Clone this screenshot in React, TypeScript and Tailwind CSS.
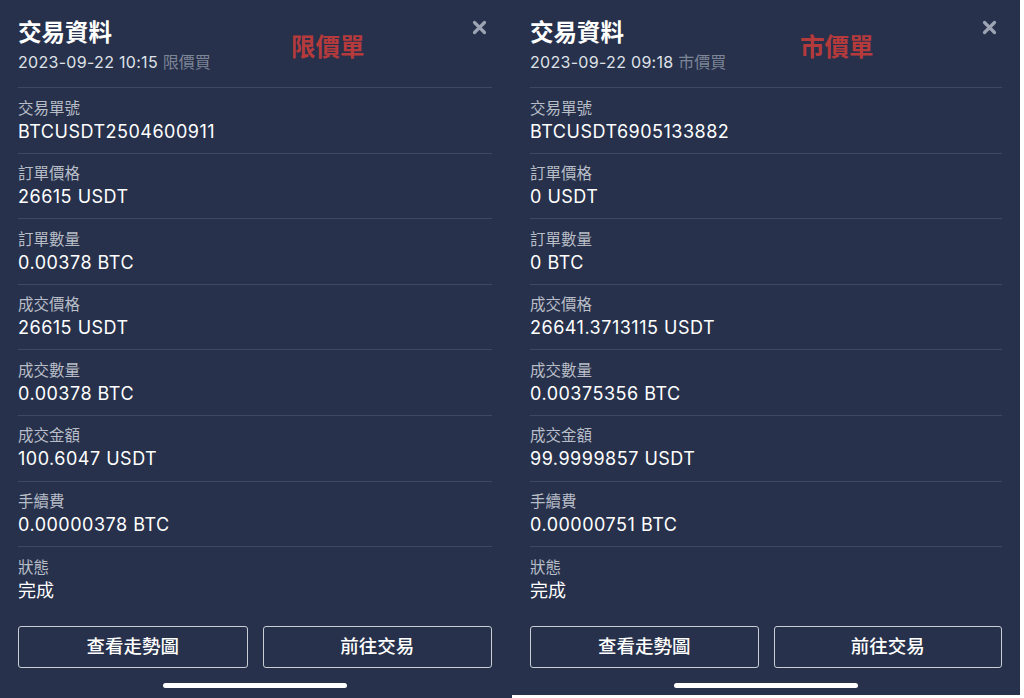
const font = { fontFamily: 'Inter, "Noto Sans CJK TC", sans-serif' }

type Row = { label: string; value: string }

function CloseIcon() {
  return (
    <svg width="15" height="15" viewBox="0 0 15 15" className="text-[#9ca3b3]">
      <path d="M2.5 2.5 L12.5 12.5 M12.5 2.5 L2.5 12.5" stroke="currentColor" strokeWidth="3.2" strokeLinecap="round" />
    </svg>
  )
}

function Panel({
  time,
  kind,
  tag,
  tagLeft,
  rows,
  status,
  width,
  height,
  pr,
}: {
  time: string
  kind: string
  tag: string
  tagLeft: string
  rows: Row[]
  status: string
  width: string
  height: string
  pr: string
}) {
  return (
    <div className={`relative flex flex-col bg-[#27314b] pl-[18px] ${width} ${height} ${pr}`} style={font}>
      <div className="flex items-start justify-between pt-[18px]">
        <div>
          <div className="text-[23.5px] font-semibold leading-[30px] text-white">交易資料</div>
          <div className="mt-[4px] text-[16px] leading-[20px] tracking-[0.3px] text-[#dfe2e8]">
            {time} <span className="tracking-normal text-[#7e8596]">{kind}</span>
          </div>
        </div>
        <div className="mr-[5px] mt-[2px]">
          <CloseIcon />
        </div>
      </div>
      <div className={`absolute top-[33px] text-[24.5px] font-bold leading-[28px] text-[#b53a3c] ${tagLeft}`}>{tag}</div>

      <div className="mt-[15px]">
        {rows.map((r) => (
          <div key={r.label} className="h-[65.6px] border-t border-[#3e4862] pt-[10.5px]">
            <div className="text-[15.5px] leading-[20px] text-[#b8bdc7]">{r.label}</div>
            <div className="text-[18px] leading-[25px] tracking-[0.5px] text-white">{r.value}</div>
          </div>
        ))}
        <div className="border-t border-[#3e4862] pt-[10.5px]">
          <div className="text-[15.5px] leading-[20px] text-[#b8bdc7]">狀態</div>
          <div className="text-[18px] leading-[25px] text-white">{status}</div>
        </div>
      </div>

      <div className="mt-[23px] grid grid-cols-2 gap-[15px]">
        <button className="h-[42px] rounded-[3px] border-[1.5px] border-[#c9cdd5] text-[18.5px] font-medium text-white">
          查看走勢圖
        </button>
        <button className="h-[42px] rounded-[3px] border-[1.5px] border-[#c9cdd5] text-[18.5px] font-medium text-white">
          前往交易
        </button>
      </div>

      <div className="mt-[15px] flex justify-center">
        <div className="h-[5px] w-[184px] rounded-full bg-white" />
      </div>
    </div>
  )
}

export default function App() {
  const leftRows: Row[] = [
    { label: '交易單號', value: 'BTCUSDT2504600911' },
    { label: '訂單價格', value: '26615 USDT' },
    { label: '訂單數量', value: '0.00378 BTC' },
    { label: '成交價格', value: '26615 USDT' },
    { label: '成交數量', value: '0.00378 BTC' },
    { label: '成交金額', value: '100.6047 USDT' },
    { label: '手續費', value: '0.00000378 BTC' },
  ]
  const rightRows: Row[] = [
    { label: '交易單號', value: 'BTCUSDT6905133882' },
    { label: '訂單價格', value: '0 USDT' },
    { label: '訂單數量', value: '0 BTC' },
    { label: '成交價格', value: '26641.3713115 USDT' },
    { label: '成交數量', value: '0.00375356 BTC' },
    { label: '成交金額', value: '99.9999857 USDT' },
    { label: '手續費', value: '0.00000751 BTC' },
  ]

  return (
    <div className="flex h-[698px] w-[1024px] items-start overflow-hidden bg-white">
      <Panel
        time="2023-09-22 10:15"
        kind="限價買"
        tag="限價單"
        tagLeft="left-[291px]"
        rows={leftRows}
        status="完成"
        width="w-[512px]"
        height="h-[698px]"
        pr="pr-[20px]"
      />
      <Panel
        time="2023-09-22 09:18"
        kind="市價買"
        tag="市價單"
        tagLeft="left-[288px]"
        rows={rightRows}
        status="完成"
        width="w-[508px]"
        height="h-[695px]"
        pr="pr-[18px]"
      />
    </div>
  )
}
